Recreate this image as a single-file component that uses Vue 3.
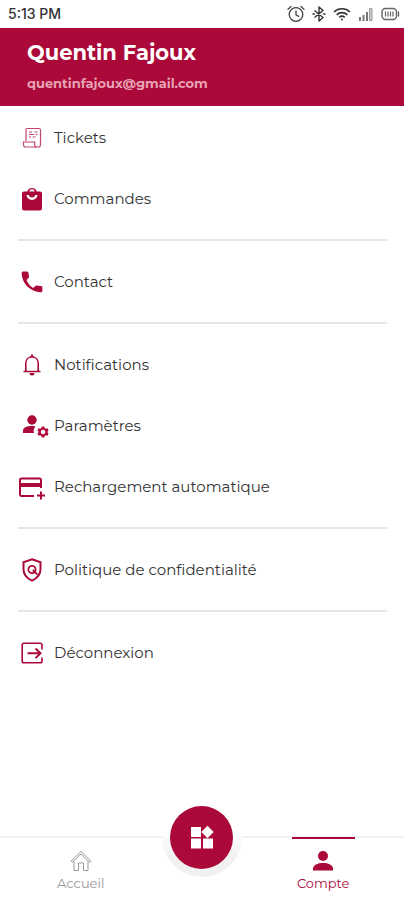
<script setup>
import { ref } from 'vue'

const user = { name: 'Quentin Fajoux', email: 'quentinfajoux@gmail.com' }

const groups = [
  [
    { id: 'tickets', label: 'Tickets' },
    { id: 'commandes', label: 'Commandes' }
  ],
  [{ id: 'contact', label: 'Contact' }],
  [
    { id: 'notifications', label: 'Notifications' },
    { id: 'parametres', label: 'Paramètres' },
    { id: 'rechargement', label: 'Rechargement automatique' }
  ],
  [{ id: 'politique', label: 'Politique de confidentialité' }],
  [{ id: 'deconnexion', label: 'Déconnexion' }]
]

const tab = ref('compte')
</script>

<template>
  <div class="app">
    <div class="status">
      <span class="time">5:13 PM</span>
      <div class="status-icons">
        <!-- alarm -->
        <svg width="18" height="18" viewBox="0 0 18 18" fill="none" stroke="#444" stroke-width="1.3" stroke-linecap="round">
          <circle cx="9" cy="9.5" r="6.8" />
          <path d="M1 4.2 4 1.5M17 4.2 14 1.5M9 6v3.8l2.6 1.6" />
        </svg>
        <!-- bluetooth -->
        <svg width="14" height="16" viewBox="0 0 14 16" fill="none" stroke="#333" stroke-width="1.4" stroke-linejoin="round">
          <path d="M2.5 4.5 11 11.5 7 15V1l4 3.5-8.5 7" />
          <path d="M1 8h1.5M11.5 8H13" stroke-linecap="round" />
        </svg>
        <!-- wifi -->
        <svg width="18" height="14" viewBox="0 0 18 14" fill="none" stroke="#333" stroke-width="1.7">
          <path d="M1 5a11.5 11.5 0 0 1 16 0M3.7 7.8a7.6 7.6 0 0 1 10.6 0M6.3 10.4a4 4 0 0 1 5.4 0" />
          <circle cx="9" cy="12.5" r="1" fill="#333" stroke="none" />
        </svg>
        <!-- signal -->
        <svg width="16" height="14" viewBox="0 0 16 14" fill="#777">
          <path d="M1 10h2v4H1zM4.5 8h2v6h-2zM8 5h2v9H8z" />
          <path d="M11.5 1.5H14v12h-2.5z" fill="#ccc" stroke="#999" />
        </svg>
        <!-- battery -->
        <svg width="19" height="14" viewBox="0 0 19 14" fill="none" stroke="#666" stroke-width="1.4">
          <rect x="1" y="1.5" width="14.5" height="11" rx="3.5" />
          <path d="M17.5 5v4" stroke-linecap="round" />
          <path d="M4.5 4.5v5M7 4.5v5M9.5 4.5v5M12 4.5v5" stroke-width="1.2" />
        </svg>
      </div>
    </div>

    <header class="header">
      <h1>{{ user.name }}</h1>
      <p>{{ user.email }}</p>
    </header>

    <main class="menu">
      <ul v-for="(group, i) in groups" :key="i" class="group">
        <li v-for="item in group" :key="item.id">
          <a class="row" :href="'#' + item.id">
            <svg class="icon" viewBox="0 0 24 24" aria-hidden="true">
              <g v-if="item.id === 'tickets'" class="line thin">
                <path d="M6 15V4.2c0-1 .6-1.7 1.5-1.7H19c1 0 1.5.7 1.5 1.7V18.5c0 1.5-.8 2.5-2 2.5H5.5" />
                <path d="M16.5 21c-1.2 0-1.8-1-1.8-2.2V16H3.5v2.5c0 1.5.8 2.5 2 2.5" />
                <path d="M9 6h3M14.5 6h3M9 8.5h5M15.5 8.5h2M9 11h2M12.5 11h3" />
              </g>
              <path
                v-else-if="item.id === 'commandes'"
                class="solid"
                fill-rule="evenodd"
                d="M20 4.5h-3.2A5 5 0 0 0 7.2 4.5H4a2 2 0 0 0-2 2v15a2 2 0 0 0 2 2h16a2 2 0 0 0 2-2v-15a2 2 0 0 0-2-2zM12 2a3 3 0 0 1 2.8 2.5H9.2A3 3 0 0 1 12 2zM12 13a5.5 5.5 0 0 1-5.5-5h2.2a3.4 3.4 0 0 0 6.6 0h2.2A5.5 5.5 0 0 1 12 13z"
              />
              <path
                v-else-if="item.id === 'contact'"
                class="solid"
                d="M22 16.2l-5-.7c-.6-.1-1.2.1-1.6.5l-2.2 2A16.5 16.5 0 0 1 6.5 10l2-2c.4-.4.6-1 .5-1.6l-.6-3.8A1.7 1.7 0 0 0 6.7 1.5H3.2C2.2 1.5 1.5 2.4 1.6 3.4 2.2 14 10.5 21.5 20.5 22.3c1 .1 1.9-.6 1.9-1.6v-3.5c0-.5-.1-.9-.4-1z"
              />
              <g v-else-if="item.id === 'notifications'" class="line">
                <path d="M3.5 18.5h17M5.8 18.5V10.2C5.8 6.5 8.3 4 12 4s6.2 2.5 6.2 6.2v8.3" />
                <path class="solid" d="M12 .8l2 3h-4zM9.5 20h5a2.5 2.5 0 0 1-5 0z" stroke="none" />
              </g>
              <g v-else-if="item.id === 'parametres'" class="solid">
                <circle cx="12" cy="6" r="4.7" />
                <path d="M3 19v-2.5c0-3.2 4.5-4.5 9-4.5 1.3 0 2.3.1 3.4.4-1.7 1.8-2.1 4.2-1.4 6.6z" />
                <g transform="translate(23 18)">
                  <path
                    fill-rule="evenodd"
                    d="M-1.2-5.5h2.4l.4 1.5 1.3.8 1.5-.5 1.2 2.1-1.1 1v1.2l1.1 1-1.2 2.1-1.5-.5-1.3.8-.4 1.5h-2.4l-.4-1.5-1.3-.8-1.5.5-1.2-2.1 1.1-1V-.6l-1.1-1 1.2-2.1 1.5.5 1.3-.8zM0-2.3a2.3 2.3 0 1 0 0 4.6 2.3 2.3 0 0 0 0-4.6z"
                  />
                </g>
              </g>
              <g v-else-if="item.id === 'rechargement'" class="line strong">
                <path d="M14 21H1.5C.6 21 0 20.4 0 19.5V5c0-.9.6-1.5 1.5-1.5h18c.9 0 1.5.6 1.5 1.5v8" />
                <path d="M21 16.5v8M17 20.5h8" />
                <path class="solid" d="M0 8h21v4H0z" stroke="none" />
              </g>
              <g v-else-if="item.id === 'politique'" class="line strong">
                <path d="M12 1.2l8.5 3.1v7c0 5-3 8.9-8.5 11.400C6.500 20.200 3.500 16.300 3.500 11.300v-7z" />
                <circle cx="12" cy="11.5" r="3.600" stroke-width="1.800" />
                <path d="M12.800 12l4.700 4.700" stroke-width="1.800" />
              </g>
              <g v-else class="line">
                <path d="M22 8.5V4c0-1-.8-1.8-1.8-1.8H4C3 2.2 2.2 3 2.2 4v16c0 1 .8 1.8 1.8 1.8h16.2c1 0 1.8-.8 1.8-1.8v-3.5" />
                <path d="M7.5 12.3h12.8M15.5 7.5l5 4.8-5 4.8" stroke-width="2" />
              </g>
            </svg>
            <span>{{ item.label }}</span>
          </a>
        </li>
      </ul>
    </main>

    <nav class="tabs">
      <button type="button" class="tab" :class="{ active: tab === 'accueil' }" @click="tab = 'accueil'">
        <svg width="22" height="22" viewBox="0 0 22 22" fill="none" stroke="currentColor" stroke-linejoin="round" aria-hidden="true">
          <path d="M1 11.2 11 1.5l10 9.7-1.2 1.2L11 4l-8.8 8.4z" />
          <path d="M4 11v9.5h4.5V13h5v7.5H18V11" />
        </svg>
        <span>Accueil</span>
      </button>
      <div class="middle">
        <div class="halo">
          <button type="button" class="fab" aria-label="Services">
            <svg width="24" height="24" viewBox="0 0 24 24" fill="#fff" aria-hidden="true">
              <path d="M1 2h10v10H1zM1 13.5h10v10H1zM13 13.5h10v10H13zM17.5.8l6.2 6.2-6.2 6.2L11.3 7z" />
            </svg>
          </button>
        </div>
      </div>
      <button type="button" class="tab" :class="{ active: tab === 'compte' }" @click="tab = 'compte'">
        <svg width="22" height="22" viewBox="0 0 22 22" fill="currentColor" aria-hidden="true">
          <circle cx="11" cy="6" r="5" />
          <path d="M1 20.5v-2C1 15 6 13 11 13s10 2 10 5.5v2z" />
        </svg>
        <span>Compte</span>
      </button>
    </nav>
  </div>
</template>

<style>
body {
  margin: 0;
  background: #fff;
}
</style>

<style scoped>
.app {
  --brand: #ab0939;
  display: flex;
  flex-direction: column;
  min-height: 100vh;
  background: #fff;
  color: #333;
  font-family: Montserrat, 'DejaVu Sans', sans-serif;
}

.status {
  display: flex;
  align-items: center;
  justify-content: space-between;
  height: 28px;
  padding: 0 4px 0 8px;
}
.time {
  font: 500 14px/20px Inter, sans-serif;
}
.status-icons {
  display: flex;
  align-items: center;
  gap: 7px;
}

.header {
  box-sizing: border-box;
  height: 78px;
  padding: 11px 27px;
  background: var(--brand);
  color: #fff;
}
.header h1 {
  margin: 0;
  font-size: 21px;
  line-height: 28px;
  font-weight: 700;
}
.header p {
  margin: 6px 0 0;
  font-size: 13px;
  line-height: 20px;
  font-weight: 700;
  color: #e9a3b6;
}

.menu {
  flex: 1;
  padding: 1px 17px 0 18px;
}
.group {
  margin: 0;
  padding: 0;
  list-style: none;
}
.group + .group {
  margin-top: 10px;
  padding-top: 10px;
  border-top: 2px solid #e6e6e6;
}
.row {
  display: flex;
  align-items: center;
  gap: 10px;
  height: 61px;
  padding-left: 2px;
  color: inherit;
  font-size: 15px;
  line-height: 20px;
  text-decoration: none;
}
.icon {
  flex: none;
  width: 24px;
  height: 24px;
  overflow: visible;
}
.solid {
  fill: var(--brand);
}
.line {
  fill: none;
  stroke: var(--brand);
  stroke-width: 1.6;
}
.thin {
  stroke-width: 1.2;
  opacity: 0.75;
}
.strong {
  stroke-width: 2;
}

.tabs {
  display: grid;
  grid-template-columns: 2fr 1fr 2fr;
  height: 62px;
  border-top: 2px solid #f2f2f2;
}
.tab {
  position: relative;
  display: flex;
  flex-direction: column;
  align-items: center;
  gap: 2px;
  padding: 12px 0 0;
  border: 0;
  background: none;
  color: #999;
  font: 13px/18px Montserrat, 'DejaVu Sans', sans-serif;
  cursor: pointer;
}
.tab.active {
  color: var(--brand);
}
.tab.active::before {
  content: '';
  position: absolute;
  top: -1px;
  width: 63px;
  height: 2px;
  background: var(--brand);
}
.middle {
  position: relative;
}
.halo {
  position: absolute;
  top: -41px;
  left: 50%;
  display: flex;
  align-items: center;
  justify-content: center;
  width: 80px;
  height: 80px;
  border-radius: 50%;
  background: linear-gradient(#fff 45%, #f1f1f1 75%);
  transform: translateX(-50%);
}
.fab {
  display: flex;
  align-items: center;
  justify-content: center;
  width: 63px;
  height: 63px;
  padding: 0;
  border: 0;
  border-radius: 50%;
  background: var(--brand);
  cursor: pointer;
}
</style>
